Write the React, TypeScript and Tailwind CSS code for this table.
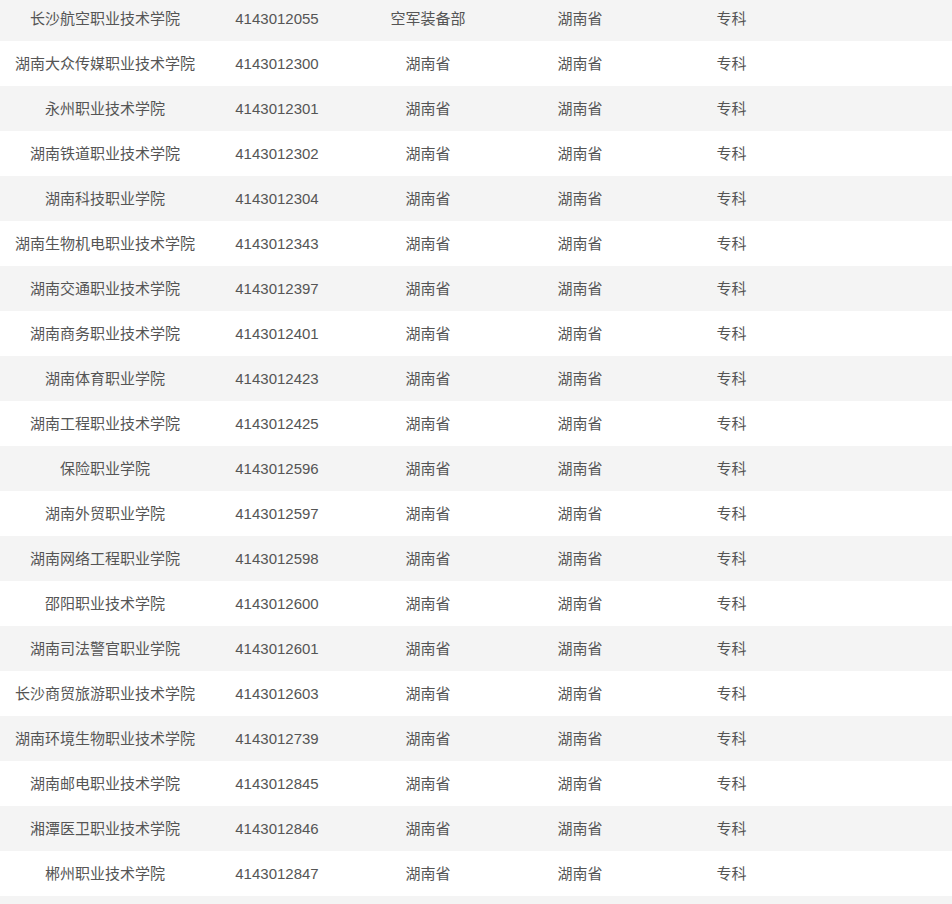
const rows: [string, string, string, string, string][] = [
  ["长沙航空职业技术学院", "4143012055", "空军装备部", "湖南省", "专科"],
  ["湖南大众传媒职业技术学院", "4143012300", "湖南省", "湖南省", "专科"],
  ["永州职业技术学院", "4143012301", "湖南省", "湖南省", "专科"],
  ["湖南铁道职业技术学院", "4143012302", "湖南省", "湖南省", "专科"],
  ["湖南科技职业学院", "4143012304", "湖南省", "湖南省", "专科"],
  ["湖南生物机电职业技术学院", "4143012343", "湖南省", "湖南省", "专科"],
  ["湖南交通职业技术学院", "4143012397", "湖南省", "湖南省", "专科"],
  ["湖南商务职业技术学院", "4143012401", "湖南省", "湖南省", "专科"],
  ["湖南体育职业学院", "4143012423", "湖南省", "湖南省", "专科"],
  ["湖南工程职业技术学院", "4143012425", "湖南省", "湖南省", "专科"],
  ["保险职业学院", "4143012596", "湖南省", "湖南省", "专科"],
  ["湖南外贸职业学院", "4143012597", "湖南省", "湖南省", "专科"],
  ["湖南网络工程职业学院", "4143012598", "湖南省", "湖南省", "专科"],
  ["邵阳职业技术学院", "4143012600", "湖南省", "湖南省", "专科"],
  ["湖南司法警官职业学院", "4143012601", "湖南省", "湖南省", "专科"],
  ["长沙商贸旅游职业技术学院", "4143012603", "湖南省", "湖南省", "专科"],
  ["湖南环境生物职业技术学院", "4143012739", "湖南省", "湖南省", "专科"],
  ["湖南邮电职业技术学院", "4143012845", "湖南省", "湖南省", "专科"],
  ["湘潭医卫职业技术学院", "4143012846", "湖南省", "湖南省", "专科"],
  ["郴州职业技术学院", "4143012847", "湖南省", "湖南省", "专科"],
]

export default function App() {
  return (
    <div
      className="w-[952px] h-[904px] overflow-hidden bg-white text-[15px] text-[#555]"
      style={{ fontFamily: '"Liberation Sans", "Noto Sans CJK SC", sans-serif' }}
    >
      <div className="-mt-1">
        {rows.map((r, i) => (
          <div
            key={r[1]}
            className={`grid grid-cols-[210px_134px_168px_136px_167px_1fr] h-[45px] items-center pt-px text-center ${
              i % 2 === 0 ? "bg-[#f4f4f4]" : "bg-white"
            }`}
          >
            {r.map((c, j) => (
              <div key={j} className="whitespace-nowrap">
                {c}
              </div>
            ))}
            <div />
          </div>
        ))}
        {/* next row, scrolled out of view */}
        <div className="h-[45px] bg-[#f4f4f4]" />
      </div>
    </div>
  )
}
